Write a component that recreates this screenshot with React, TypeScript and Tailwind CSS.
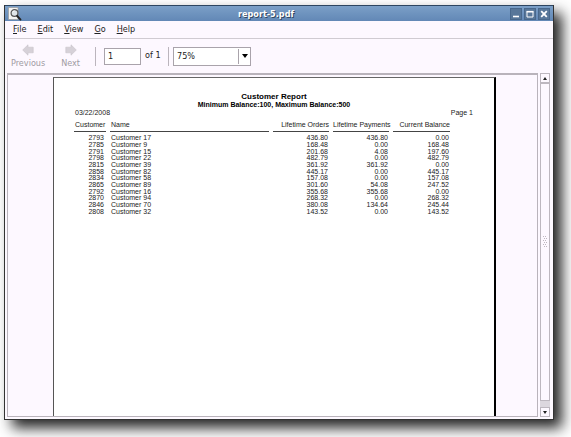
import { useState } from "react";
import type { ReactNode } from "react";

const MENUS = [
  ["F", "ile"],
  ["E", "dit"],
  ["V", "iew"],
  ["G", "o"],
  ["H", "elp"],
];

const ROWS = [
  ["2793", "Customer 17", "436.80", "436.80", "0.00"],
  ["2785", "Customer 9", "168.48", "0.00", "168.48"],
  ["2791", "Customer 15", "201.68", "4.08", "197.60"],
  ["2798", "Customer 22", "482.79", "0.00", "482.79"],
  ["2815", "Customer 39", "361.92", "361.92", "0.00"],
  ["2858", "Customer 82", "445.17", "0.00", "445.17"],
  ["2834", "Customer 58", "157.08", "0.00", "157.08"],
  ["2865", "Customer 89", "301.60", "54.08", "247.52"],
  ["2792", "Customer 16", "355.68", "355.68", "0.00"],
  ["2870", "Customer 94", "268.32", "0.00", "268.32"],
  ["2846", "Customer 70", "380.08", "134.64", "245.44"],
  ["2808", "Customer 32", "143.52", "0.00", "143.52"],
];

function WindowButton({ label, children }: { label: string; children: ReactNode }) {
  return (
    <button
      type="button"
      aria-label={label}
      className="flex h-3 w-3 items-center justify-center border border-[#48688c] bg-[#587799]"
    >
      <svg viewBox="0 0 10 10" className="h-[10px] w-[10px] shrink-0" fill="none" stroke="#fff">
        {children}
      </svg>
    </button>
  );
}

function TitleBar() {
  return (
    <header className="flex h-4 shrink-0 items-center border-t border-[#2d4560] bg-linear-to-b from-[#7b9fc7] to-[#6288b6] pr-[3px] pl-[3px]">
      <svg viewBox="0 0 14 14" className="h-[14px] w-[14px]" aria-hidden="true">
        <path d="M.5.5h9.5v12H.5z" fill="#f4f4f2" stroke="#999" strokeWidth="0.7" />
        <circle cx="6.5" cy="6" r="3.4" fill="#dfe5e8" stroke="#555" strokeWidth="1.2" />
        <path d="M4.5 5.4a2.3 2.3 0 0 1 2-1.5" stroke="#fff" fill="none" />
        <path d="m9.2 9 3.3 3.6" stroke="#222" strokeWidth="1.9" strokeLinecap="round" />
      </svg>
      <h1 className="flex-1 text-center text-[9px] leading-3 font-bold text-white [text-shadow:1px_1px_0_#33475f]">
        report-5.pdf
      </h1>
      <div className="flex gap-[2px]">
        <WindowButton label="Minimize">
          <path d="M2 7.5h6" strokeWidth="1.6" />
        </WindowButton>
        <WindowButton label="Maximize">
          <path d="M2 2.5h6v5.5H2z" />
          <path d="M1.5 2.7h7" strokeWidth="1.6" />
        </WindowButton>
        <WindowButton label="Close">
          <path d="m2.2 2.2 5.6 5.6m0-5.6L2.2 7.8" strokeWidth="1.8" />
        </WindowButton>
      </div>
    </header>
  );
}

function NavButton({ label, flip }: { label: string; flip?: boolean }) {
  return (
    <button type="button" disabled className="flex flex-col items-center gap-[2px] text-[#a09ba2]">
      <svg
        viewBox="0 0 12 12"
        className={flip ? "h-3 w-3 -scale-x-100" : "h-3 w-3"}
        fill="#d6d1d8"
        stroke="#c8c3ca"
        strokeWidth="0.6"
        aria-hidden="true"
      >
        <path d="M.7 6 6 .8v2.4h5.2v5.6H6v2.4z" />
      </svg>
      <span className="leading-[10px]">{label}</span>
    </button>
  );
}

function Separator() {
  return <div className="h-[19px] w-px bg-[#bbb5bd]" />;
}

function Toolbar() {
  const [page, setPage] = useState("1");
  const [zoom, setZoom] = useState("75%");
  return (
    <div className="flex h-[35px] shrink-0 items-center border-t border-[#d0cbd2] pl-[6px]">
      <div className="flex gap-4">
        <NavButton label="Previous" />
        <NavButton label="Next" flip />
      </div>
      <div className="flex items-center pl-[15px]">
        <Separator />
        <input
          id="page"
          value={page}
          onChange={(e) => setPage(e.target.value)}
          className="ml-2 h-[17px] w-[37px] border border-[#a9a3ab] bg-white px-[3px] leading-3 outline-none"
        />
        <label htmlFor="page" className="w-[27px] pl-1">
          of 1
        </label>
        <Separator />
        <div className="relative ml-1">
          <select
            aria-label="Zoom"
            value={zoom}
            onChange={(e) => setZoom(e.target.value)}
            className="block h-[19px] w-[78px] appearance-none border border-[#a9a3ab] bg-white px-[3px] leading-3 outline-none"
          >
            <option>50%</option>
            <option>75%</option>
            <option>100%</option>
          </select>
          <div className="pointer-events-none absolute inset-y-[2px] right-[1px] flex w-3 items-center justify-center border-l border-[#a9a3ab]">
            <svg viewBox="0 0 6 4" className="h-1 w-[6px]" aria-hidden="true">
              <path d="M0 0h6L3 4z" />
            </svg>
          </div>
        </div>
      </div>
    </div>
  );
}

function HeadCell({ children, right }: { children: ReactNode; right?: boolean }) {
  return (
    <th scope="col" className="p-0 font-normal whitespace-nowrap">
      <div className={`mr-1 border-b border-[#444] pb-[2px] ${right ? "text-right" : "pl-px text-left"}`}>
        {children}
      </div>
    </th>
  );
}

function Columns() {
  return (
    <colgroup>
      <col className="w-9" />
      <col className="w-[163px]" />
      <col className="w-[60px]" />
      <col className="w-[60px]" />
      <col className="w-[61px]" />
    </colgroup>
  );
}

function Report() {
  return (
    <article className="h-full w-[443px] shrink-0 border-t border-r-2 border-l border-t-[#666] border-r-black border-l-[#555] bg-white px-5 pt-[15px] font-['Liberation_Sans',Arial,sans-serif] text-[7px] leading-[8px] text-[#222]">
      <h2 className="text-center text-[8px] leading-[8px] font-bold text-black">Customer Report</h2>
      <p className="text-center font-bold text-black">Minimum Balance:100, Maximum Balance:500</p>
      <div className="flex justify-between px-px leading-[7px]">
        <span>03/22/2008</span>
        <span>Page 1</span>
      </div>
      <table className="mt-[5px] w-[380px] table-fixed border-separate border-spacing-0">
        <Columns />
        <thead>
          <tr>
            <HeadCell>Customer</HeadCell>
            <HeadCell>Name</HeadCell>
            <HeadCell right>Lifetime Orders</HeadCell>
            <HeadCell right>Lifetime Payments</HeadCell>
            <HeadCell right>Current Balance</HeadCell>
          </tr>
        </thead>
      </table>
      <table
        aria-label="Customer balances"
        className="mt-[3px] h-20 w-[380px] table-fixed border-separate border-spacing-0"
      >
        <Columns />
        <tbody className="leading-[6px]">
          {ROWS.map(([id, name, orders, payments, balance]) => (
            <tr key={id}>
              <td className="p-0 pr-[6px] text-right">{id}</td>
              <td className="p-0 pl-px">{name}</td>
              <td className="p-0 pr-[5px] text-right">{orders}</td>
              <td className="p-0 pr-[5px] text-right">{payments}</td>
              <td className="p-0 pr-[5px] text-right">{balance}</td>
            </tr>
          ))}
        </tbody>
      </table>
    </article>
  );
}

function ScrollButton({ label, down }: { label: string; down?: boolean }) {
  return (
    <button
      type="button"
      aria-label={label}
      className="flex h-[10px] w-full shrink-0 items-center justify-center border border-[#bdb7bf] bg-[#fdf8ff]"
    >
      <svg viewBox="0 0 4 3" className={down ? "h-[3px] w-1 rotate-180" : "h-[3px] w-1"} aria-hidden="true">
        <path d="M0 3h4L2 0z" fill="#222" />
      </svg>
    </button>
  );
}

export default function App() {
  return (
    <div className="flex h-screen bg-white pt-[5px] pr-[17px] pb-[17px] pl-1 font-['DejaVu_Sans_Condensed','DejaVu_Sans',Verdana,sans-serif] text-[9px] text-[#222]">
      <main className="flex min-w-0 flex-1 flex-col border border-t-0 border-[#333] bg-[#fdf8ff] shadow-[8px_8px_13px_rgba(0,0,0,0.85)]">
        <TitleBar />
        <nav className="flex h-[17px] shrink-0 items-center gap-[11px] pl-2">
          {MENUS.map(([key, rest]) => (
            <button type="button" key={key}>
              <span className="underline">{key}</span>
              {rest}
            </button>
          ))}
        </nav>
        <Toolbar />
        <div className="flex min-h-0 flex-1 gap-[2px] pr-[3px] pb-[2px] pl-[2px]">
          <div className="flex min-w-0 flex-1 justify-center overflow-hidden border border-t-2 border-[#b9b3bb] pt-[2px] pl-1">
            <Report />
          </div>
          <div className="flex w-[10px] flex-col bg-[#dcd7de]">
            <ScrollButton label="Scroll up" />
            <div className="flex flex-1 items-center justify-center border border-[#bdb7bf] bg-[#fdf8ff]">
              <svg viewBox="0 0 4 12" className="h-3 w-1" fill="#bdb7bf" aria-hidden="true">
                <path d="M0 0h1v1H0zM2 0h1v1H2zM1 2h1v1H1zM3 2h1v1H3zM0 4h1v1H0zM2 4h1v1H2zM1 6h1v1H1zM3 6h1v1H3zM0 8h1v1H0zM2 8h1v1H2zM1 10h1v1H1zM3 10h1v1H3z" />
              </svg>
            </div>
            <div className="h-[6px]" />
            <ScrollButton label="Scroll down" down />
          </div>
        </div>
      </main>
    </div>
  );
}
